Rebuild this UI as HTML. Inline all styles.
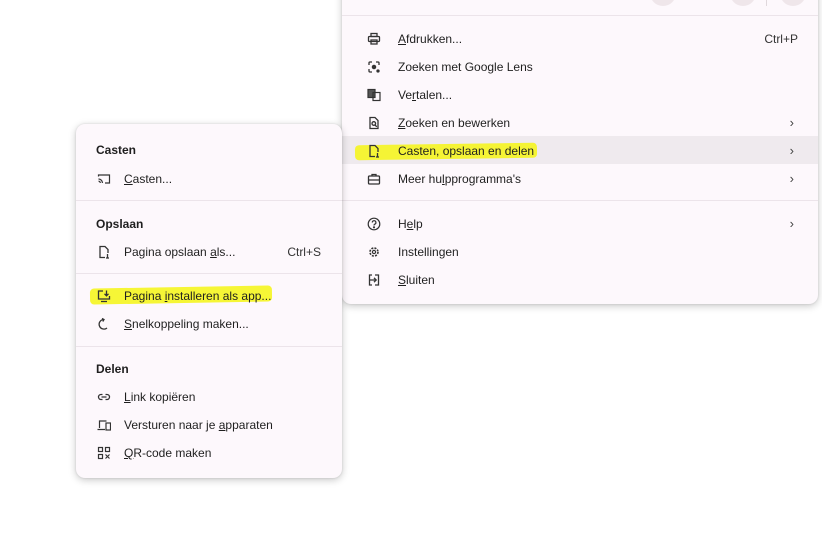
<!DOCTYPE html>
<html><head><meta charset="utf-8"><style>
*{margin:0;padding:0;box-sizing:border-box}
body{width:822px;height:534px;background:#fff;position:relative;overflow:hidden;font-family:"Liberation Sans",Arial,sans-serif;font-size:12px;color:#1f1f1f}
.menu{position:absolute;background:#fdf8fc;border-radius:9px;box-shadow:0 2px 8px rgba(0,0,0,.22),0 0 2px rgba(0,0,0,.12)}
.row{position:absolute;left:0;right:0;height:28px;line-height:28px}
.row .t{position:absolute;top:0}
.row svg{position:absolute;top:7px;width:14px;height:14px}
.sep{position:absolute;left:0;right:0;height:1px;background:#ece4ea}
.h{position:absolute;font-weight:bold;font-size:12px}
.k{position:absolute;right:20px;top:0;color:#333}
.ch{position:absolute;right:24px;top:0;color:#444;font-size:13px}
.hl{position:absolute;background:#f5f520;opacity:.9;border-radius:4px}
u{text-decoration:underline;text-underline-offset:1px}
</style></head><body>

<div class="menu" style="left:342px;top:-20px;width:476px;height:324px">
  <div style="position:absolute;left:308px;top:0;width:26px;height:26px;border-radius:50%;background:#efe6ea"></div>
  <div style="position:absolute;left:388px;top:0;width:26px;height:26px;border-radius:50%;background:#efe6ea"></div>
  <div style="position:absolute;left:424px;top:10px;width:1px;height:16px;background:#e0d8dc"></div>
  <div style="position:absolute;left:438px;top:0;width:26px;height:26px;border-radius:50%;background:#efe6ea"></div>
  <div class="sep" style="top:35px"></div>
  <div class="row" style="top:45px"><svg style="left:25px" viewBox="0 0 14 14" fill="none" stroke="#333" stroke-width="1.3"><rect x="4" y="1.5" width="6" height="3"/><rect x="1.5" y="4.5" width="11" height="5" rx="1"/><rect x="4" y="8" width="6" height="4"/></svg><span class="t" style="left:56px"><u>A</u>fdrukken...</span><span class="k">Ctrl+P</span></div>
  <div class="row" style="top:73px"><svg style="left:25px" viewBox="0 0 14 14" fill="none" stroke="#333" stroke-width="1.3"><path d="M2 5V3a1 1 0 0 1 1-1h2M9 2h2a1 1 0 0 1 1 1v2M2 9v2a1 1 0 0 0 1 1h2"/><circle cx="7" cy="7" r="1.6" fill="#333"/><circle cx="11" cy="11" r="1" fill="#333"/></svg><span class="t" style="left:56px">Zoeken met Google Lens</span></div>
  <div class="row" style="top:101px"><svg style="left:25px" viewBox="0 0 14 14" fill="none" stroke="#333" stroke-width="1.2"><rect x="1" y="1.5" width="7" height="8" fill="#555"/><rect x="6" y="4.5" width="7" height="8"/></svg><span class="t" style="left:56px">Ve<u>r</u>talen...</span></div>
  <div class="row" style="top:129px"><svg style="left:25px" viewBox="0 0 14 14" fill="none" stroke="#333" stroke-width="1.3"><path d="M3 1.5h5l3 3v8H3z"/><circle cx="6.8" cy="7.5" r="1.8"/><path d="M8 9l1.8 1.8"/></svg><span class="t" style="left:56px"><u>Z</u>oeken en bewerken</span><span class="ch">›</span></div>
  <div class="row" style="top:156px;background:#efeaee"></div>
  <div class="hl" style="left:13px;top:164px;width:182px;height:15px;transform:rotate(-.8deg)"></div>
  <div class="row" style="top:157px"><svg style="left:25px" viewBox="0 0 14 14" fill="none" stroke="#333" stroke-width="1.3"><path d="M8 12.5H3v-11h5l3 3V8"/><path d="M10.5 9v3.5M9 13h3"/></svg><span class="t" style="left:56px">Casten, opslaan en delen</span><span class="ch">›</span></div>
  <div class="row" style="top:185px"><svg style="left:25px" viewBox="0 0 14 14" fill="none" stroke="#333" stroke-width="1.3"><rect x="1.5" y="4" width="11" height="8" rx="1"/><path d="M5 4V2.5h4V4M1.5 8h11"/></svg><span class="t" style="left:56px">Meer hu<u>l</u>pprogramma's</span><span class="ch">›</span></div>
  <div class="sep" style="top:220px"></div>
  <div class="row" style="top:230px"><svg style="left:25px" viewBox="0 0 14 14" fill="none" stroke="#333" stroke-width="1.2"><circle cx="7" cy="7" r="5.8"/><path d="M5.3 5.5a1.8 1.8 0 1 1 2.4 1.7c-.6.3-.7.6-.7 1.3"/><circle cx="7" cy="10.3" r=".5" fill="#333"/></svg><span class="t" style="left:56px">H<u>e</u>lp</span><span class="ch">›</span></div>
  <div class="row" style="top:258px"><svg style="left:25px" viewBox="0 0 14 14" fill="none" stroke="#333" stroke-width="1.6"><circle cx="7" cy="7" r="4" stroke-dasharray="2 1.2"/><circle cx="7" cy="7" r="1.6" stroke-width="1.2"/></svg><span class="t" style="left:56px">Instellin<u>g</u>en</span></div>
  <div class="row" style="top:286px"><svg style="left:25px" viewBox="0 0 14 14" fill="none" stroke="#333" stroke-width="1.3"><path d="M5 2H2.5v10H5M8 2h3.5v10H8M3 7h6M7 4.8L9.2 7 7 9.2"/></svg><span class="t" style="left:56px"><u>S</u>luiten</span></div>
</div>

<div class="menu" style="left:76px;top:124px;width:266px;height:354px">
  <div class="h" style="left:20px;top:19px">Casten</div>
  <div class="row" style="top:41px"><svg style="left:21px" viewBox="0 0 14 14" fill="none" stroke="#333" stroke-width="1.2"><path d="M1.5 4.5V3h11v8H8"/><path d="M1.5 7a4 4 0 0 1 4 4M1.5 9.2a1.8 1.8 0 0 1 1.8 1.8"/></svg><span class="t" style="left:48px"><u>C</u>asten...</span></div>
  <div class="sep" style="top:76px"></div>
  <div class="h" style="left:20px;top:93px">Opslaan</div>
  <div class="row" style="top:114px"><svg style="left:21px" viewBox="0 0 14 14" fill="none" stroke="#333" stroke-width="1.3"><path d="M8 12.5H3v-11h5l3 3V8"/><path d="M10.5 9v3.5M9 13h3"/></svg><span class="t" style="left:48px">Pagina opslaan <u>a</u>ls...</span><span class="k" style="right:21px">Ctrl+S</span></div>
  <div class="sep" style="top:149px"></div>
  <div class="hl" style="left:14px;top:163px;width:182px;height:16px;transform:rotate(-1deg)"></div>
  <div class="row" style="top:158px"><svg style="left:21px" viewBox="0 0 14 14" fill="none" stroke="#333" stroke-width="1.3"><path d="M6 2H1.5v8h11V7M4 12.5h6"/><path d="M9.5 1.5v5M7.5 4.8l2 2 2-2"/></svg><span class="t" style="left:48px">Pagina <u>i</u>nstalleren als app...</span></div>
  <div class="row" style="top:186px"><svg style="left:21px" viewBox="0 0 14 14" fill="none" stroke="#333" stroke-width="1.3"><path d="M7 2.5a4.8 4.8 0 1 0 3 8.5M5 1.5l2 1-1.2 2"/></svg><span class="t" style="left:48px"><u>S</u>nelkoppeling maken...</span></div>
  <div class="sep" style="top:222px"></div>
  <div class="h" style="left:20px;top:238px">Delen</div>
  <div class="row" style="top:259px"><svg style="left:21px" viewBox="0 0 14 14" fill="none" stroke="#333" stroke-width="1.3"><path d="M5.5 4.5H4a2.5 2.5 0 0 0 0 5h1.5M8.5 4.5H10a2.5 2.5 0 0 1 0 5H8.5M4.5 7h5"/></svg><span class="t" style="left:48px"><u>L</u>ink kopiëren</span></div>
  <div class="row" style="top:287px"><svg style="left:21px" viewBox="0 0 14 14" fill="none" stroke="#333" stroke-width="1.2"><path d="M2.5 10V3h7M0.5 11.5h7.5"/><rect x="9" y="5" width="4.5" height="7"/></svg><span class="t" style="left:48px">Versturen naar je <u>a</u>pparaten</span></div>
  <div class="row" style="top:315px"><svg style="left:21px" viewBox="0 0 14 14" fill="none" stroke="#333" stroke-width="1.2"><rect x="1.5" y="1.5" width="4" height="4"/><rect x="8.5" y="1.5" width="4" height="4"/><rect x="1.5" y="8.5" width="4" height="4"/><path d="M8.5 8.5l4 4M12.5 8.5l-4 4"/></svg><span class="t" style="left:48px"><u>Q</u>R-code maken</span></div>
</div>
</body></html>
